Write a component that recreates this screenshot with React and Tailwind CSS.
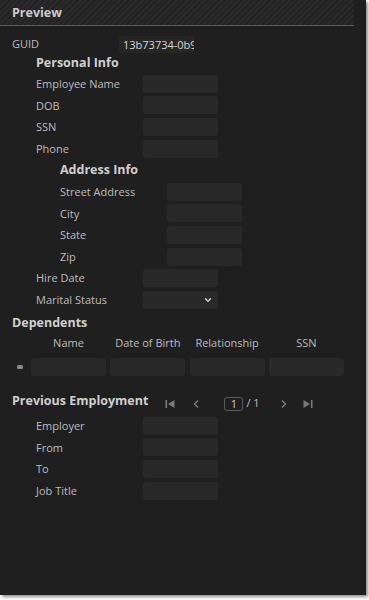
import React from "react";
import { ChevronDown } from "lucide-react";

const font = { fontFamily: '"Open Sans", "Noto Sans", sans-serif' };

function Input({ text, className = "" }) {
  return (
    <div className={`h-[18px] w-[75px] shrink-0 rounded-[3px] bg-[#292929] overflow-hidden whitespace-nowrap ${className}`}>
      {text}
    </div>
  );
}

function Row({ label, indent, select }) {
  return (
    <div className={`flex h-[21.6px] items-center ${indent}`}>
      <div className="w-[107px] shrink-0 pt-[1px] text-[11px] text-[#bdbdbd]">{label}</div>
      {select ? (
        <div className="flex h-[18px] w-[75px] items-center justify-end rounded-[3px] bg-[#292929] pr-[5px]">
          <ChevronDown size={10} strokeWidth={3.5} color="#d0d0d0" />
        </div>
      ) : (
        <Input />
      )}
    </div>
  );
}

function Heading({ children, className = "" }) {
  return <div className={`text-[12.5px] font-bold text-[#d0d0d0] ${className}`}>{children}</div>;
}

export default function App() {
  return (
    <div className="bg-white w-[369px] h-[600px]" style={font}>
      <div className="w-[366px] h-[595px] bg-[#1f1f1f] shadow-[2px_2px_3px_rgba(0,0,0,0.45)] flex flex-col">
        <div className="h-[26px] w-[354px] shrink-0 border-b border-[#5a5a5a] bg-[repeating-linear-gradient(135deg,#2a2a2a_0px,#2a2a2a_2px,#222222_2px,#222222_4px)] pl-[12px] leading-[26px] text-[12.5px] font-bold text-[#cccccc]">
          Preview
        </div>

        <div className="mt-[9px] flex h-[18px] items-center pl-[12px]">
          <div className="w-[107px] shrink-0 pt-[1px] text-[11px] text-[#bdbdbd]">GUID</div>
          <div className="h-[17px] w-[75px] overflow-hidden whitespace-nowrap rounded-[3px] bg-[#262626] pl-[4px] text-[11px] leading-[17px] text-[#d6d6d6]">
            13b73734-0b9c
          </div>
        </div>

        <Heading className="h-[20px] leading-[20px] pl-[36px]">Personal Info</Heading>
        <Row label="Employee Name" indent="pl-[36px]" />
        <Row label="DOB" indent="pl-[36px]" />
        <Row label="SSN" indent="pl-[36px]" />
        <Row label="Phone" indent="pl-[36px]" />
        <Heading className="h-[21.6px] leading-[21.6px] pl-[60px]">Address Info</Heading>
        <Row label="Street Address" indent="pl-[60px]" />
        <Row label="City" indent="pl-[60px]" />
        <Row label="State" indent="pl-[60px]" />
        <Row label="Zip" indent="pl-[60px]" />
        <Row label="Hire Date" indent="pl-[36px]" />
        <Row label="Marital Status" indent="pl-[36px]" select />

        <Heading className="h-[24px] leading-[24px] pl-[12px]">Dependents</Heading>
        <div className="flex h-[16px] pl-[31px] gap-[4.3px] text-[11px] leading-[16px] text-[#bdbdbd]">
          <div className="w-[75px] text-center">Name</div>
          <div className="w-[75px] text-center">Date of Birth</div>
          <div className="w-[75px] text-center">Relationship</div>
          <div className="w-[75px] text-center">SSN</div>
        </div>
        <div className="mt-[7px] flex h-[18px] items-center pl-[17px]">
          <div className="h-[4px] w-[6px] rounded-[1.5px] bg-[#8a8a8a]" />
          <div className="ml-[8px] flex gap-[4.3px]">
            <Input />
            <Input />
            <Input />
            <Input />
          </div>
        </div>

        <div className="mt-[14px] flex h-[22px] items-center pl-[12px]">
          <Heading className="leading-[22px]">Previous Employment</Heading>
          <div className="ml-[17px] mt-[6px] flex h-[14px] items-center text-[#7a7a7a]">
            <svg width="10" height="10" viewBox="0 0 10 10" className="mr-[18px]">
              <rect x="0.5" y="1" width="1.6" height="8" fill="currentColor" />
              <path d="M9.5 1 L3 5 L9.5 9 Z" fill="currentColor" />
            </svg>
            <svg width="6" height="10" viewBox="0 0 6 10" className="mr-[25px]">
              <path d="M5 1.5 L1.5 5 L5 8.5" fill="none" stroke="currentColor" strokeWidth="1.5" />
            </svg>
            <div className="h-[14px] w-[19px] rounded-[3px] border border-[#5a5a5a] text-center text-[11px] leading-[12px] text-[#cfcfcf]">
              1
            </div>
            <div className="ml-[3px] text-[11px] text-[#bdbdbd]">/ 1</div>
            <svg width="6" height="10" viewBox="0 0 6 10" className="ml-[21px]">
              <path d="M1 1.5 L4.5 5 L1 8.5" fill="none" stroke="currentColor" strokeWidth="1.5" />
            </svg>
            <svg width="10" height="10" viewBox="0 0 10 10" className="ml-[16px]">
              <path d="M0.5 1 L7 5 L0.5 9 Z" fill="currentColor" />
              <rect x="7.9" y="1" width="1.6" height="8" fill="currentColor" />
            </svg>
          </div>
        </div>
        <div className="mt-[3.4px]">
          <Row label="Employer" indent="pl-[36px]" />
          <Row label="From" indent="pl-[36px]" />
          <Row label="To" indent="pl-[36px]" />
          <Row label="Job Title" indent="pl-[36px]" />
        </div>
      </div>
    </div>
  );
}
